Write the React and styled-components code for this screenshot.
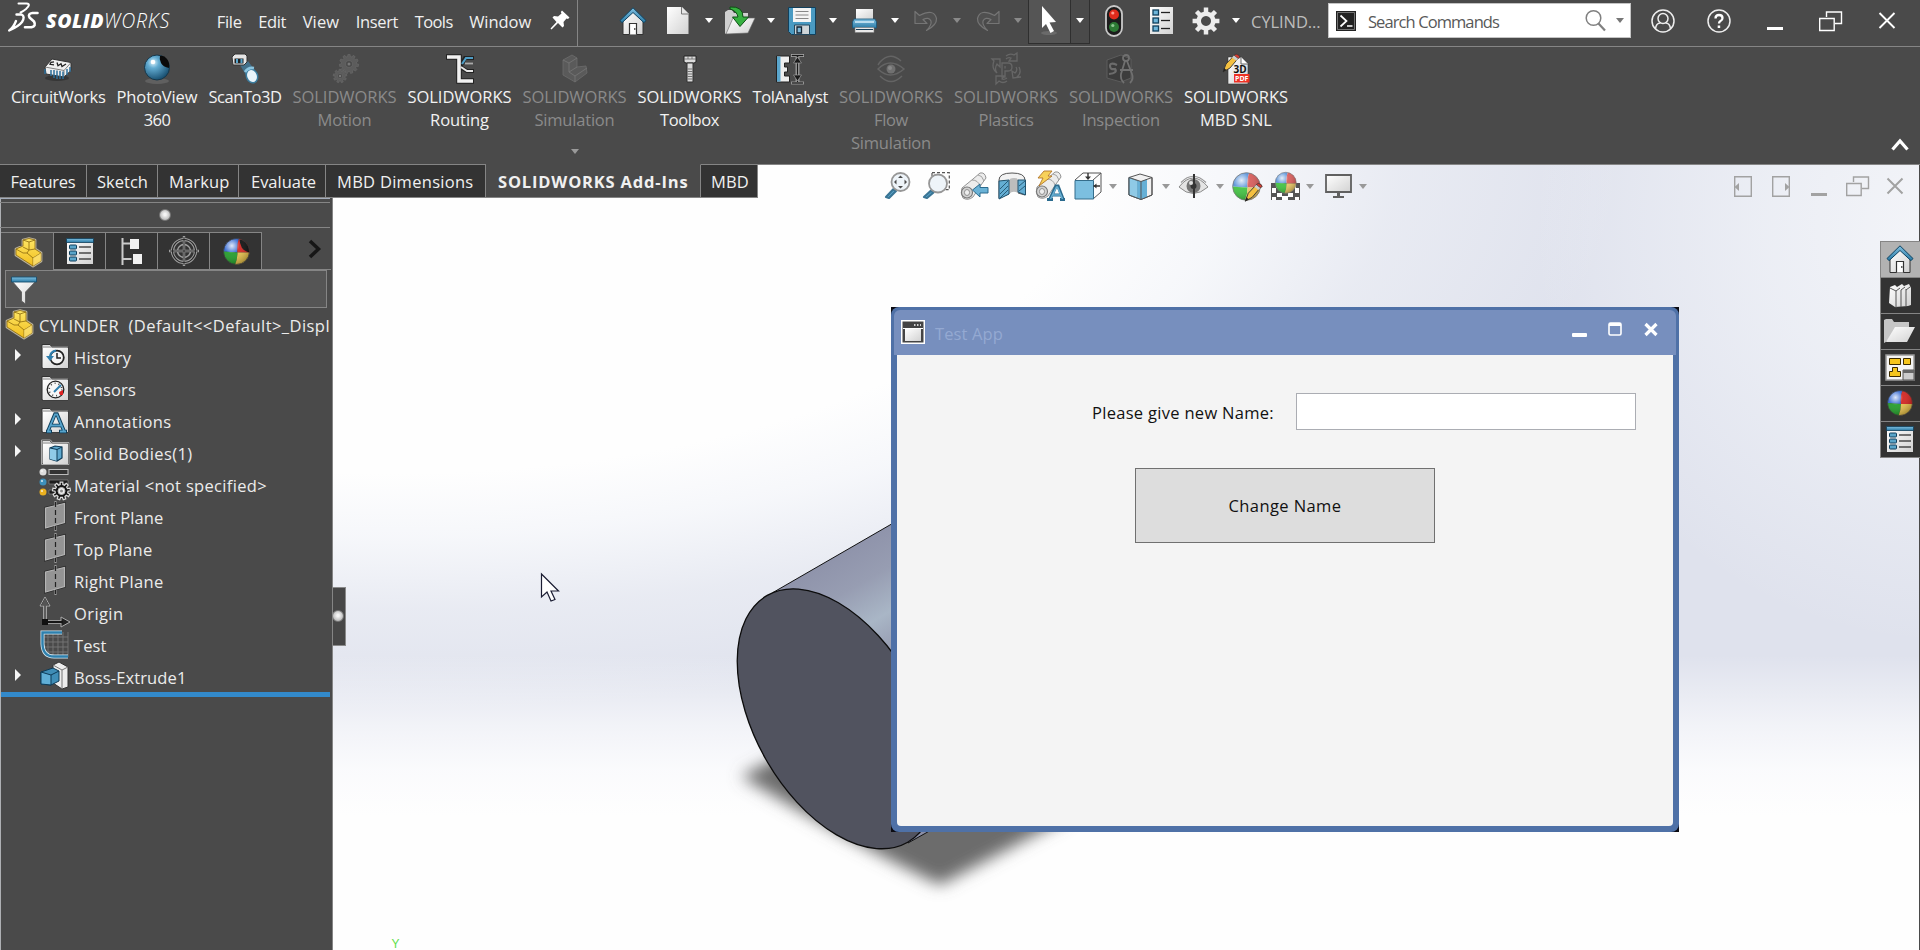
import React, { useLayoutEffect, useRef, useState } from "react";
import styled, { createGlobalStyle, css } from "styled-components";

const GlobalStyle = createGlobalStyle`
  * { box-sizing: border-box; }
  body { margin: 0; overflow: hidden; background: #4a4a4a; }
  button, input { font: inherit; }
`;

const LINE = "#858585";

/* ---------- text ---------- */

const TextSpan = styled.span`
  display: inline-block;
  white-space: pre;
`;

/* Tracks its letters so that the text fills the given width. */
function FitText({ width, children, ...rest }) {
  const ref = useRef(null);
  const [spacing, setSpacing] = useState(0);
  useLayoutEffect(() => {
    const natural = ref.current.getBoundingClientRect().width - spacing * children.length;
    setSpacing((width - natural) / children.length);
  }, [width, children]);
  return (
    <TextSpan ref={ref} style={{ letterSpacing: spacing }} {...rest}>
      {children}
    </TextSpan>
  );
}

/* ---------- drawing primitives ---------- */

const Svg = styled.svg`
  display: block;
  flex: none;
  overflow: visible;
`;

const Ico = ({ w = 28, h = 28, vw, vh, children }) => (
  <Svg width={w} height={h} viewBox={`0 0 ${vw || w} ${vh || h}`} fill="none">
    {children}
  </Svg>
);

const HiddenDefs = styled.svg`
  position: absolute;
  width: 0;
  height: 0;
`;

const Defs = () => (
  <HiddenDefs>
    <defs>
      <linearGradient id="paper" x1="0" y1="0" x2="1" y2="1">
        <stop offset="0" stopColor="#fff" />
        <stop offset="1" stopColor="#d2d2d2" />
      </linearGradient>
      <linearGradient id="blue" x1="0" y1="0" x2="0" y2="1">
        <stop offset="0" stopColor="#7fbfe0" />
        <stop offset="1" stopColor="#2a7ba6" />
      </linearGradient>
      <linearGradient id="gold" x1="0" y1="0" x2="0" y2="1">
        <stop offset="0" stopColor="#ffe766" />
        <stop offset="1" stopColor="#f0bd1c" />
      </linearGradient>
      <radialGradient id="orb" cx=".35" cy=".3" r=".75">
        <stop offset="0" stopColor="#d9f1fb" />
        <stop offset=".3" stopColor="#62abd1" />
        <stop offset="1" stopColor="#144a6b" />
      </radialGradient>
      <radialGradient id="gloss" cx=".32" cy=".28" r=".75">
        <stop offset="0" stopColor="#fff" stopOpacity=".85" />
        <stop offset=".4" stopColor="#fff" stopOpacity=".08" />
        <stop offset="1" stopColor="#000" stopOpacity=".25" />
      </radialGradient>
      <clipPath id="ballClip"><circle cx="14" cy="14" r="12.5" /></clipPath>
    </defs>
  </HiddenDefs>
);

const BallBody = ({ eye, soft }) => {
  const c = soft ? ["#5590d8", "#d85a58", "#3fc23f", "#efcb66"] : ["#2d64d0", "#d2201c", "#1f9a26", "#e6c04a"];
  return (
    <>
      <g clipPath="url(#ballClip)">
        <path d="M0 0h17q-3 7-2 15L0 14z" fill={c[0]} />
        <path d="M17 0h11v15l-13 0q-1-8 2-15z" fill={c[1]} />
        <path d="M0 14l15 1q0 7-3 13H0z" fill={c[2]} />
        <path d="M15 15h13v13H12q3-6 3-13z" fill={c[3]} />
        {eye && <path d="M17 3q4-2 7 2t3 10q-6-1-8-5t-2-7z" fill="#0c0c0c" />}
      </g>
      <circle cx="14" cy="14" r="12.5" fill="url(#gloss)" stroke={soft ? "#777" : "#3a3a3a"} strokeWidth=".7" />
    </>
  );
};

const Ball = ({ size = 26, eye, soft, children }) => (
  <Ico w={size} h={size} vw={28} vh={28}>
    <BallBody eye={eye} soft={soft} />
    {children}
  </Ico>
);

const HomeIcon = ({ size = 28 }) => (
  <Ico w={size} h={size} vw={28} vh={28}>
    <path d="M4 14L14 4l10 10v13.500H4z" fill="url(#paper)" stroke="#333" strokeWidth="1" />
    <path d="M1 13.500L14 .800l13 12.700-2 2.200L14 5.500 3 15.700z" fill="url(#blue)" stroke="#0e4260" strokeWidth="1" />
    <path d="M10.500 27.500V16.500h7v11" fill="#fff" stroke="#333" strokeWidth="1.200" />
    <path d="M15 22h1.500" stroke="#333" strokeWidth="1.500" />
  </Ico>
);

const PartIcon = () => (
  <Ico w={28} h={30}>
    <path d="M9 3l6-1.500 6 1.500v9l6 4v8l-8 5L2 18v-6l7-3z" fill="#4a4a4a" stroke="#b9b19a" strokeWidth="2.800" strokeLinejoin="round" />
    <path d="M9 3l6-1.500 6 1.500v9l6 4v8l-8 5L2 18v-6l7-3z" fill="url(#gold)" stroke="#8a680c" strokeWidth=".8" strokeLinejoin="round" />
    <path d="M9 3l6 2 6-2M15 5v8l-6-3M15 13l6-1M15 13l-2 3 6 5 8-5M19 21v8M2 12l7 4 4 0" stroke="#8a680c" strokeWidth=".8" />
    <path d="M19 21l8-5v8l-8 5z" fill="#ffe98a" opacity=".6" />
  </Ico>
);

const ListIcon = () => (
  <Ico w={28} h={27}>
    <path d="M1 1h26v25H1z" fill="url(#paper)" />
    <path d="M.500.500h27v4H.500z" fill="url(#blue)" stroke="#103f5a" strokeWidth=".8" />
    {[7, 13, 19].map((y) => (
      <g key={y}>
        <rect x="3.500" y={y} width="7" height="4" rx=".8" fill="#5aa5c9" stroke="#0f3f5c" />
        <path d={`M13 ${y + 2}h12`} stroke="#222" strokeWidth="1.200" />
      </g>
    ))}
  </Ico>
);

const NARROW_LIST = (
  <Ico w={23} h={27}>
    <path d="M0 0h23v27H0z" fill="url(#paper)" />
    {[3, 11, 19].map((y) => (
      <g key={y}>
        <rect x="3" y={y} width="5.500" height="5" fill="#6eb6da" stroke="#0f3f5c" strokeWidth="1.300" />
        <path d={`M11 ${y + 2.5}h9`} stroke="#222" strokeWidth="1.300" />
      </g>
    ))}
  </Ico>
);

const NewIcon = (
  <Ico w={22} h={27}>
    <path d="M0 0h15l6.500 6.500V27H0z" fill="url(#paper)" />
    <path d="M14.500 0v7h7" fill="#e5e5e5" stroke="#777" />
  </Ico>
);

const OpenIcon = (
  <Ico w={32} h={29}>
    <path d="M1 28V6l3-2 4 0 2 3h14v6z" fill="#cfcfcf" />
    <path d="M2 28L9 12h22l-7 15z" fill="url(#paper)" stroke="#666" strokeWidth=".6" />
    <path d="M6 1q13-1 13 10h5.500L16 20.500 8.500 11H14Q13 5 6 3z" fill="#36b040" stroke="#0d4f14" strokeWidth="1" />
  </Ico>
);

const SaveIcon = (
  <Ico w={28} h={28}>
    <path d="M.500.500h27v27h-24l-3-3z" fill="#4a9ac2" stroke="#12405c" />
    <path d="M5 1h18v14H5z" fill="#f4f4f4" />
    <path d="M7.500 4.500h13M7.500 8h13M7.500 11.500h13" stroke="#888" strokeWidth="1.200" />
    <path d="M6.500 18h15v9.500h-15z" fill="#cfd5d8" stroke="#24485e" />
    <path d="M9 20h4.500v6H9z" fill="#7fb9d8" stroke="#123" strokeWidth="1.300" />
  </Ico>
);

const PrintIcon = (
  <Ico w={25} h={24}>
    <path d="M4 0h17v11H4z" fill="url(#paper)" />
    <path d="M2 10h21l1.500 3v6h-24v-6z" fill="url(#blue)" stroke="#17567a" strokeWidth=".8" />
    <path d="M3 13h19" stroke="#d9effa" strokeWidth="1.500" />
    <path d="M3 18.500h19v5H3z" fill="#e9e9e9" stroke="#777" strokeWidth=".6" />
    <path d="M4 20.500h17" stroke="#16405a" />
  </Ico>
);

const Undo = ({ flip }) => (
  <Ico w={24} h={22}>
    <g transform={flip ? "translate(24 0) scale(-1 1)" : undefined}>
      <path d="M1 1.500v12h12L9 9.500q6-3 8 1.500 1 4-4.500 9.500Q23 15 22.500 8.500 20-2 5.500 5.500z" fill="#505050" stroke="#757575" strokeWidth="1.200" strokeLinejoin="round" />
    </g>
  </Ico>
);

const PointerIcon = (
  <Ico w={20} h={29}>
    <ellipse cx="9" cy="27" rx="8" ry="2" fill="#6a6a6a" />
    <path d="M2 0l14 16-6.500.500 4.500 8.500-3.500 2-4.500-9-4 4z" fill="#fff" />
  </Ico>
);

const TrafficIcon = (
  <Ico w={18} h={32}>
    <rect x="1" y="1" width="16" height="30" rx="8" fill="#1c1c1c" stroke="#c9c9c9" strokeWidth="1.800" />
    <circle cx="9" cy="9.500" r="5" fill="#e02b1c" />
    <circle cx="7.800" cy="8" r="1.600" fill="#ff9a8c" />
    <circle cx="9" cy="22" r="5" fill="#2c7a34" />
    <circle cx="7.800" cy="20.500" r="1.600" fill="#8cc791" />
  </Ico>
);

const gearPath = (cx, cy, r, R, n) => {
  const pts = [];
  for (let i = 0; i < n; i++) {
    const a = (i * 2 * Math.PI) / n;
    const s = Math.PI / n;
    [[r, -s * 0.6], [R, -s * 0.42], [R, s * 0.42], [r, s * 0.6]].forEach(([q, d]) =>
      pts.push(`${(cx + q * Math.sin(a + d)).toFixed(2)} ${(cy - q * Math.cos(a + d)).toFixed(2)}`)
    );
  }
  return `M${pts.join("L")}Z`;
};

const GearIcon = (
  <Ico w={28} h={28}>
    <path d={gearPath(14, 14, 9.6, 13.6, 8) + "M14 9a5 5 0 1 0 .01 0z"} fill="#ececec" fillRule="evenodd" />
  </Ico>
);

const PinIcon = (
  <Ico w={20} h={20}>
    <path d="M12 .500l7.500 7-1.500 1.500-1.500-.500-3 3.500.500 4-1.500 1.500-4.500-4.500L1.500 19.500l-1-1L6.500 12 2.500 7.500 4 6l4 .500L11.500 3.500 10.800 2z" fill="#fff" />
  </Ico>
);

/* ribbon icons */
const CircuitIcon = (
  <Ico w={30} h={28}>
    <ellipse cx="14" cy="23" rx="12" ry="3" fill="#363636" />
    <path d="M2 12L9 4l19 3.500v8L21 22 3 19z" fill="#efefef" stroke="#333" />
    <path d="M2 12l19 3.500 7-8M21 15.500V22" stroke="#666" strokeWidth=".8" />
    <path d="M11 6.800l-3 .500-1 2 4 .500M14 7.500l1 3.200 3-2 1 2.800 4-2.500" stroke="#222" strokeWidth="1.300" />
    <path d="M8 15v6M11 15v8M14 15.500V24M17 16v8M20 16.500V24M24 14v6M27 12v5M2 14v5" stroke="#2d6f9a" strokeWidth="1.500" />
  </Ico>
);
const PhotoIcon = (
  <Ico w={28} h={30}>
    <ellipse cx="14" cy="27" rx="12" ry="3" fill="#606060" />
    <circle cx="14" cy="13.500" r="12.500" fill="url(#orb)" stroke="#16374a" />
    <path d="M17 2q4-1 7 3t2 9q-6-1-8-5t-1-7z" fill="#0a0a0a" />
    <circle cx="10" cy="8" r="2.300" fill="#fff" />
  </Ico>
);
const ScanIcon = (
  <Ico w={28} h={30}>
    <path d="M9 11l8-4 9 12-10 4z" fill="#3f86ad" opacity=".65" />
    <path d="M1 3l3-3h10l2 2v6l-3 3H2z" fill="#e6e6e6" stroke="#333" />
    <path d="M3.500 4.500h9v5h-9z" fill="#222" />
    <path d="M6 5v4M10.500 5v4" stroke="#56a5cd" strokeWidth="2" />
    <ellipse cx="21" cy="22" rx="5.500" ry="7" transform="rotate(-20 21 22)" fill="#e9f4fa" stroke="#3b7c9e" strokeWidth="1.500" />
    <path d="M14 18q3-5 9-4" stroke="#8bc4df" strokeWidth="2.600" />
  </Ico>
);
const MotionIcon = (
  <Ico w={28} h={30}>
    <g fill="#5c5c5c" stroke="#6c6c6c" strokeWidth=".6" fillRule="evenodd">
      <path d={gearPath(18, 10, 7.6, 9.6, 11) + "M18 6.500a3.500 3.500 0 1 0 .01 0z"} />
      <path d={gearPath(9, 22, 5, 6.8, 9) + "M9 19.500a2.500 2.500 0 1 0 .01 0z"} />
    </g>
    <circle cx="18" cy="10" r="1.500" fill="#777" />
    <circle cx="9" cy="22" r="1.200" fill="#777" />
  </Ico>
);
const RoutingIcon = (
  <Ico w={28} h={30}>
    <path d="M0 3h13v24h15" stroke="#222" strokeWidth="5.500" />
    <path d="M14 13l5-9h9M14 13l7 4h7" stroke="#222" strokeWidth="4" />
    <path d="M1 3h12v24h14" stroke="#f2f2f2" strokeWidth="3.600" />
    <path d="M16 10l4-6h7" stroke="#4e9cc4" strokeWidth="2.200" />
    <path d="M19 9.500h8" stroke="#aaa" strokeWidth="1.800" />
    <path d="M15 13l6 4h6" stroke="#e5e5e5" strokeWidth="2" />
  </Ico>
);
const SimulationIcon = (
  <Ico w={28} h={30}>
    <path d="M2 6l9-5 5 3v9l9-1 1 7-12 9L2 21z" fill="#5a5a5a" stroke="#6c6c6c" strokeWidth=".8" />
    <path d="M2 6l6 3v9l6 4 12-8M8 9l8-5M14 22v6M8 18l8-5" stroke="#747474" strokeWidth=".9" />
  </Ico>
);
const ToolboxIcon = (
  <Ico w={14} h={28}>
    <path d="M1 1h12v6l-2 1H3L1 7z" fill="#dcdcdc" stroke="#222" />
    <path d="M1 4h12M5 1v3M9 1v3" stroke="#666" strokeWidth=".8" />
    <path d="M4 8h6v19H4z" fill="#dadada" stroke="#333" />
    <path d="M4.500 14h5M4.500 16.500h5M4.500 19h5M4.500 21.500h5M4.500 24h5" stroke="#666" strokeWidth=".9" />
  </Ico>
);
const TolIcon = (
  <Ico w={29} h={30}>
    <path d="M.500 2h13v7H8.500v4h3v5h-3v4h5v6H.500z" fill="#eee" stroke="#222" />
    <path d="M1 2.500h3.500v25H1z" fill="#5aa6cd" />
    <path d="M15 1.500h13M15 29h13" stroke="#ddd" strokeWidth="2.600" />
    <path d="M21.500 2v26" stroke="#c5c5c5" strokeWidth="3.600" />
    <path d="M15.500 1.500h12M15.500 29h12M21.500 2v26" stroke="#1a1a1a" strokeWidth="1.600" />
    <path d="M17.500 9l4-6 4 6zM17.500 21l4 6 4-6z" fill="#1a1a1a" stroke="#aaa" strokeWidth=".6" />
  </Ico>
);
const FlowIcon = (
  <Ico w={30} h={26}>
    <g stroke="#646464" strokeWidth="1.500">
      <path d="M4 6Q14-5 25 5M4 6l-2 3M4 20q11 11 22 0" />
      <path d="M2 13q12-12 26 0-14 12-26 0z" />
    </g>
    <circle cx="15" cy="13" r="4.500" fill="#707070" />
    <circle cx="14" cy="12" r="2" fill="#888" />
  </Ico>
);
const PlasticsIcon = (
  <Ico w={30} h={32}>
    <g stroke="#666" strokeWidth="1.300">
      <path d="M11 24V10h6q4 0 4 4t-4 4h-3v6zM14 13v2.500" />
      <path d="M1 6h8v8L6 11q-3 5 0 9-6-5-3-12zM15 3q4-3 8-1l3-2v8h-8l2-3q-3-1-5 1M28 14q3 6-2 10h4l-8 1-1-7 3 2q3-3 1-6M16 28q-4 3-8 0l-3 3v-8h8l-2 3q2 1 5-1" />
    </g>
  </Ico>
);
const InspectionIcon = (
  <Ico w={30} h={32}>
    <path d="M1 7l14-5 10 4v19l-10 4L1 25z" fill="#3c3c3c" stroke="#5c5c5c" />
    <path d="M11 12q-7-3-7 1t5 3q3 4-6 5" stroke="#6c6c6c" strokeWidth="2.200" />
    <g stroke="#707070" strokeWidth="1.800"><circle cx="20" cy="5" r="3" /><path d="M19 8l-4 13q-1 5 3 9M21 8l5 13q2 5-2 9M14 17h13" /></g>
  </Ico>
);
const Pencil = ({ x, y, s = 1 }) => (
  <g transform={`translate(${x} ${y}) scale(${s})`}>
    <path d="M1 17L4 9 12 .500l4 3-8 9.500z" fill="#f4c040" stroke="#333" strokeWidth=".9" />
    <path d="M12 .500l2-1.500q4 1 4 3.500l-2 1z" fill="#d23c32" stroke="#333" strokeWidth=".7" />
    <path d="M10 2.500l4.500 3.200 1.500-2L12 .500z" fill="#ccc" />
    <path d="M1 17l1-4 2.500 2z" fill="#222" />
  </g>
);
const BadgeText = styled.text`
  font: 700 ${(p) => p.$size}px "Open Sans", sans-serif;
`;
const MbdIcon = (
  <Ico w={28} h={32}>
    <path d="M6 4h13l7 7v20H6z" fill="url(#paper)" stroke="#333" strokeWidth=".6" />
    <path d="M19 4v7h7" stroke="#666" fill="#fff" />
    <BadgeText $size={10} x="11.500" y="20" fill="#111">3D</BadgeText>
    <path d="M12 21h15.500v8.500H12z" fill="#ee3124" />
    <BadgeText $size={7} x="13" y="28" fill="#fff">PDF</BadgeText>
    <Pencil x={0} y={2} s={1} />
  </Ico>
);

/* feature tree icons */
const Folder = ({ children }) => (
  <Ico w={28} h={26}>
    <path d="M1 25V1.500h8l2 2.500h16v21z" fill="#e0e0e0" stroke="#333" strokeWidth="1" />
    <path d="M2 5h25v20H2z" fill="url(#paper)" />
    <path d="M1 4h26" stroke="#999" />
    {children}
  </Ico>
);
const HistoryIcon = (
  <Folder>
    <circle cx="16" cy="14.500" r="6.800" stroke="#222" strokeWidth="1.800" fill="#f5f5f5" />
    <path d="M16 10v5h4" stroke="#222" strokeWidth="1.500" />
    <path d="M5 13h8l-4 5z" fill="#2f7fae" /><path d="M9 14q0-5 6-6.500" stroke="#2f7fae" strokeWidth="2.200" />
  </Folder>
);
const SensorsIcon = (
  <Folder>
    <circle cx="14.500" cy="14.500" r="8.300" stroke="#222" strokeWidth="1.300" fill="#f7f7f7" />
    <circle cx="14.500" cy="14.500" r="6.300" stroke="#444" strokeWidth="1.600" strokeDasharray="1 3" />
    <path d="M13 17l7-7" stroke="#2f7fae" strokeWidth="2" />
    <path d="M18 17l4-2v5l-3 0z" fill="#d22" />
  </Folder>
);
const AnnotationsIcon = (
  <Folder>
    <path d="M7 24L14 7h2l7 17M10 18.500h10M5 24.500h6M18 24.500h8" stroke="#0f3f5c" strokeWidth="3.600" />
    <path d="M7 24L14 7.500h2L23 24M10 18.500h10M6 24.500h4M19 24.500h6" stroke="#57a4cc" strokeWidth="1.800" />
  </Folder>
);
const Cube = ({ x, y, s }) => (
  <g transform={`translate(${x} ${y}) scale(${s})`}>
    <path d="M0 2l5-2 7 1v11l-5 3-7-2z" fill="#5fa9cf" stroke="#0d3a56" strokeWidth="1.200" />
    <path d="M0 2l7 1.500V15l-7-2z" fill="#8fcbe8" />
    <path d="M0 2l7 1.500V15M7 3.500L12 1" stroke="#0d3a56" strokeWidth="1" />
  </g>
);
const BodiesIcon = (
  <Folder>
    <path d="M.500 25V1h9l2 2.500H28V25.500H.500z" stroke="#aaa" strokeWidth="1" />
    <Cube x={9} y={7} s={1} />
  </Folder>
);
const MaterialIcon = (
  <Ico w={32} h={30}>
    {[["#ddd", 3], ["#3d8fba", 13], ["#eab020", 23]].map(([c, y]) => (
      <g key={y}><circle cx="4" cy={y} r="3.500" fill={c} /><circle cx="3" cy={y - 1} r="1" fill="#fff" opacity=".8" /></g>
    ))}
    <path d="M10 .500h19v5H10z" fill="#333" stroke="#bbb" strokeWidth="1.100" />
    <path d="M10 11h19v4H10zM10 21h10v4H10z" fill="#1d1d1d" stroke="#888" strokeWidth=".7" />
    <path d={gearPath(22.500, 22, 6.500, 9, 9)} fill="#151515" stroke="#dcdcdc" strokeWidth="1.200" />
    <circle cx="22.500" cy="22" r="3.500" fill="#eee" stroke="#bbb" />
    <circle cx="22.500" cy="22" r="1.500" fill="#888" />
  </Ico>
);
const PlaneIcon = (
  <Ico w={22} h={30}>
    <path d="M1.500 7L20.500 2.500v19L1.500 27z" fill="#8f8f8f" stroke="#2a2a2a" strokeWidth="2.600" />
    <path d="M1.500 7L20.500 2.500v19L1.500 27z" fill="#949494" stroke="#b5b5b5" strokeWidth="1.200" />
    <path d="M11.500 0v5M11.500 25v5" stroke="#999" strokeWidth="2.200" />
    <path d="M11.500 1v28" stroke="#222" strokeWidth="1.200" strokeDasharray="5 3" />
  </Ico>
);
const OriginIcon = (
  <Ico w={30} h={30}>
    <path d="M5 25V4M5 25h22" stroke="#aaa" strokeWidth="3.800" />
    <path d="M0 9L5 0l5 9zM21 20l9 5-9 5z" fill="#222" stroke="#aaa" />
    <path d="M5 25V6" stroke="#555" strokeWidth="1.800" />
    <path d="M5 25h18" stroke="#161616" strokeWidth="2.200" />
    <path d="M2 22h6v6H2z" fill="#111" />
    <path d="M1.500 8L5 1l3.500 7z" fill="#555" />
  </Ico>
);
const SketchIcon = (
  <Ico w={29} h={29}>
    <path d="M8 2v25M13 2v25M18 2v25M23 2v25M28 2v25M3 7h25M3 12h25M3 17h25M3 22h25" stroke="#777" strokeWidth=".9" />
    <path d="M22 2.500H2.500V14Q3 26.500 14 26.500h14" stroke="#d4e8f2" strokeWidth="4" />
    <path d="M22 2.500H2.500V14Q3 26.500 14 26.500h14" stroke="#2e80ad" strokeWidth="2.400" />
  </Ico>
);
const ExtrudeIcon = (
  <Ico w={29} h={28}>
    <path d="M13 3l6-3 9 5v20l-6 2-9-6z" fill="#eee" stroke="#333" />
    <path d="M13 3l9 5 6-3M22 8v19" stroke="#777" />
    <path d="M1 10l12-4 6 3v10l-8 4L1 22z" fill="#3f8db6" stroke="#0d3a56" />
    <path d="M1 10l10 3v10L1 22z" fill="#5faed6" stroke="#0d3a56" />
    <path d="M11 13l8-4" stroke="#0d3a56" />
  </Ico>
);
const FilterIcon = (
  <Ico w={26} h={29}>
    <path d="M1 5l9.500 11v9l4 3V16L25 5z" fill="url(#paper)" stroke="#555" strokeWidth=".8" />
    <path d="M.500 1h25v5H.500z" fill="url(#blue)" stroke="#174e6e" strokeWidth=".9" />
  </Ico>
);
const ConfigIcon = (
  <Ico w={22} h={27}>
    <path d="M1.500 0v27M1.500 5.500h8M1.500 21h9" stroke="#ccc" strokeWidth="2" />
    <path d="M9 1h9v10H9zM12 16h9v10h-9z" fill="#f2f2f2" />
  </Ico>
);
const TargetIcon = (
  <Ico w={30} h={30}>
    <g stroke="#a0a0a0"><circle cx="15" cy="15" r="11.500" strokeWidth="3.200" /><circle cx="15" cy="15" r="6.500" strokeWidth="1.400" /><path d="M15 0v30M0 15h30" strokeWidth="2.400" /></g>
    <g stroke="#262626" strokeWidth="1.200"><circle cx="15" cy="15" r="11.500" /><path d="M15 1v28M1 15h28" strokeWidth=".9" /></g>
  </Ico>
);

/* heads-up view icons */
const lens = (cx, cy, r) => (
  <>
    <path d={`M${cx - r * 0.8} ${cy + r * 0.8}L2 25l3 1L${cx - r * 0.5} ${cy + r}z`} fill="#5aa6cd" stroke="#3a7595" strokeWidth="2.200" strokeLinejoin="round" />
    <circle cx={cx} cy={cy} r={r} fill="#eef4f9" stroke="#979797" strokeWidth="1.800" />
  </>
);
const ZoomFit = (
  <Ico w={28} h={28}>
    {lens(16.500, 10, 9)}
    <path d="M16.500 3.500l2.500 2.500h-5zM16.500 16.500l2.500-2.500h-5zM10 10l2.500-2.500v5zM23 10l-2.500-2.500v5z" fill="#4a4a4a" />
  </Ico>
);
const ZoomArea = (
  <Ico w={28} h={28}>
    <path d="M10 .700h17.300v17h-6M10 1v3" stroke="#555" strokeDasharray="3 2" strokeWidth="1.200" />
    {lens(16, 11.500, 9)}
  </Ico>
);
const scope = (
  <>
    <path d="M2 16L13 7l7-6q5-1 6 5l-5 7-8 12q-5 4-10 1-3-5-1-10z" fill="#ececec" stroke="#888" strokeWidth=".9" />
    <ellipse cx="7" cy="20.500" rx="5.500" ry="5.500" fill="#d2d2d2" stroke="#777" strokeWidth="1.100" />
    <ellipse cx="7" cy="20.500" rx="2.600" ry="3" fill="#eee" stroke="#888" strokeWidth=".9" />
    <path d="M12 8q6 0 8 6M18 3q4 0 6 6" stroke="#999" strokeWidth=".9" />
  </>
);
const PrevView = (
  <Ico w={28} h={28}>
    {scope}
    <path d="M12.500 18l7.500-6v3.500h8v5.500h-8v4z" fill="#6ab2d6" stroke="#2b6b8e" />
  </Ico>
);
const SectionIcon = (
  <Ico w={28} h={28}>
    <path d="M1 8q0-7 13-7t13 7v15l-7-2V9h-9v13l-10 4z" fill="#f2f2f2" stroke="#555" />
    <path d="M11 9q0-3 5-3t4 3v12q-5-3-9 1z" fill="#bdbdbd" />
    <path d="M1 9l10-1v14L1 27zM20 8h7.500v15L20 20z" fill="#64aed4" stroke="#22536e" />
    <path d="M2 17l8-8M2 22l8-8M2 26l8-8M21 14l6-5M21 19l6-5" stroke="#22536e" strokeWidth=".9" />
  </Ico>
);
const DynamicIcon = (
  <Ico w={30} h={30}>
    {scope}
    <path d="M9 0h8l-4 5h4L4 15l4-8H3z" fill="#f7d15a" stroke="#b2762a" strokeWidth=".9" />
    <path d="M15 28L21 15h2l5 13M17 24h9M12 28.500h6M25 28.500h5" stroke="#2b6b8e" strokeWidth="3.200" />
    <path d="M15.500 28L21.500 16h1l5 12M17 24h9" stroke="#67b0d4" strokeWidth="1.500" />
  </Ico>
);
const OrientIcon = (
  <Ico w={28} h={28}>
    <path d="M1 8L9 1h18v19l-8 7M19 8l8-7" stroke="#555" fill="#fdfdfd" />
    <path d="M1 8.500h18.500V27H1z" fill="#7cbfe0" stroke="#356d8b" />
    <path d="M14 1v5M19.500 14H26" stroke="#333" strokeWidth="1.400" /><path d="M11 4.500h6L14 8zM22.500 11.500v5L19.500 14z" fill="#333" />
  </Ico>
);
const DisplayIcon = (
  <Ico w={25} h={27}>
    <path d="M1 4.500L12 1l12 3.500V22l-11 4.500L1 22z" fill="#f1f1f1" stroke="#555" />
    <path d="M1 4.500L10 8v17.500L1 22z" fill="#8fcae6" stroke="#356d8b" strokeWidth=".6" />
    <path d="M9.500 7.500l3.500 1L19 6V24L13 26.500l-3.500-1z" fill="#66b0d6" />
    <path d="M1 4.500L13 8.500l11-4M13 8.500v18M1 4.500V22l12 4.500L24 22V4.500" stroke="#555" />
  </Ico>
);
const EyeIcon = (
  <Ico w={29} h={24}>
    <path d="M0 13Q14-5 29 13 14 26 0 13z" fill="#e4e4e4" stroke="#8a8a8a" />
    <path d="M2 8.500Q14-4 27 8.500" stroke="#999" strokeWidth="1.200" />
    <circle cx="14.500" cy="12" r="7" fill="#757575" /><circle cx="14.500" cy="12" r="3" fill="#333" />
    <circle cx="12" cy="9" r="2" fill="#ddd" />
    <path d="M15 0v24" stroke="#333" strokeWidth="2" />
  </Ico>
);
const AppearanceIcon = (
  <Ball size={31} soft><Pencil x={12} y={12} s={0.9} /></Ball>
);
const SceneIcon = (
  <Ico w={29} h={30}>
    <path d="M0 12h29v17H0z" fill="#555" />
    <path d="M5 13h4v4H5zM21 13h4v4h-4zM1 17h4v5H1zM24 17h4v5h-4zM6 22h5v4H6zM17 22h5v4h-5zM11 25h6v4h-6zM1 26h4v3H1zM24 26h4v3h-4z" fill="#fff" />
    <g transform="translate(3 0) scale(.84)"><BallBody soft /></g>
  </Ico>
);
const MonitorIcon = (
  <Ico w={27} h={24}>
    <path d="M1 1h25v17H1z" fill="url(#paper)" stroke="#606060" strokeWidth="1.800" />
    <path d="M12 19h3v3h4v2H8v-2h4z" fill="#606060" />
  </Ico>
);

/* ---------- title bar ---------- */

const Shell = styled.div`
  width: 1920px;
  height: 950px;
  display: flex;
  flex-direction: column;
  overflow: hidden;
  background: #4a4a4a;
  color: #f0f0f0;
  font: 16.5px/23px "Open Sans", "Noto Sans", sans-serif;
`;

const TitleBar = styled.header`
  display: flex;
  height: 47px;
  flex: none;
  border-bottom: 1px solid ${LINE};
`;

const Brand = styled.div`
  display: flex;
  width: 217px;
  padding: 1px 0 0 8px;
`;
const BrandName = styled.div`
  display: flex;
  margin: 8px 0 0 7px;
  font-size: 19.5px;
  font-style: italic;
  line-height: 23px;
  color: #fff;
`;
const BrandPart = styled(FitText)`
  font-weight: ${(p) => (p.$bold ? 800 : 300)};
`;

const Menu = styled.nav`
  display: flex;
  width: 362px;
  gap: 16.5px;
  padding-top: 10px;
  border-right: 1px solid ${LINE};
`;
const PinSlot = styled.div`
  margin-left: 2px;
`;

const Tools = styled.div`
  display: flex;
  padding-left: 28px;
`;
const Cell = styled.div`
  display: flex;
  align-items: center;
  justify-content: center;
  width: ${(p) => p.$w}px;
  height: ${(p) => p.$h || 41}px;
`;
const SelectBox = styled.div`
  display: flex;
  width: 62px;
  height: 44px;
  background: #555;
  border: 1px solid #2f2f2f;
  border-top: 0;
`;
const SelectArrow = styled.div`
  display: flex;
  width: 19px;
  height: 43px;
  background: #4a4a4a;
  border-left: 1px solid #2f2f2f;
`;
const Caret = styled.i`
  width: 0;
  height: 0;
  border: 4px solid transparent;
  border-top: 5px solid ${(p) => p.$c || "#fff"};
  border-bottom: 0;
`;
const DocName = styled.div`
  width: 84px;
  padding: 10px 0 0 7px;
  color: #bdbdbd;
`;
const Search = styled.div`
  display: flex;
  align-items: center;
  width: 303px;
  height: 35px;
  margin-top: 3px;
  padding-left: 7px;
  background: #fff;
  border: 1px solid #c4c4c4;
  color: #585858;
`;
const SearchHint = styled.div`
  width: 229px;
  flex: none;
  padding: 2px 0 0 12px;
`;
const WindowControls = styled.div`
  display: flex;
  align-items: flex-start;
  height: 41px;
`;

const DropCell = ({ icon, dim, w = 24 }) => (
  <>
    <Cell $w={38}>{icon}</Cell>
    <Cell $w={w}><Caret $c={dim ? "#8a8a8a" : "#fff"} /></Cell>
  </>
);

const MENU = [["File", 25], ["Edit", 28], ["View", 36.5], ["Insert", 42.5], ["Tools", 38], ["Window", 62]];

const Title = () => (
  <TitleBar>
    <Brand>
      <Ico w={31} h={35}>
        <g stroke="#fff" strokeLinecap="round" strokeLinejoin="round">
          <path d="M10.500 2.500h8q5 .500-.500 5.500-3 2.500-5.500 3.500" strokeWidth="2" />
          <path d="M8.500 13.500h5q4 2 .500 7.500Q11 25 1.200 29.500 5.500 26.500 8 20" strokeWidth="2.400" />
          <path d="M29.500 12h-5q-5 .500-3 4.500l4.500 4q2.500 4.500-2.500 5.800H17" strokeWidth="2.600" />
        </g>
      </Ico>
      <BrandName>
        <BrandPart width={58} $bold>SOLID</BrandPart>
        <BrandPart width={66}>WORKS</BrandPart>
      </BrandName>
    </Brand>
    <Menu>
      {MENU.map(([t, w]) => <FitText key={t} width={w}>{t}</FitText>)}
      <PinSlot>{PinIcon}</PinSlot>
    </Menu>
    <Tools>
      <Cell $w={53}><HomeIcon /></Cell>
      <DropCell icon={NewIcon} />
      <DropCell icon={OpenIcon} />
      <DropCell icon={SaveIcon} />
      <DropCell icon={PrintIcon} />
      <DropCell icon={<Undo />} dim />
      <DropCell icon={<Undo flip />} dim w={21} />
      <SelectBox>
        <Cell $w={42}>{PointerIcon}</Cell>
        <SelectArrow><Cell $w={17}><Caret /></Cell></SelectArrow>
      </SelectBox>
      <Cell $w={48}>{TrafficIcon}</Cell>
      <Cell $w={47}>{NARROW_LIST}</Cell>
      <Cell $w={42}>{GearIcon}</Cell>
      <Cell $w={17}><Caret /></Cell>
    </Tools>
    <DocName><FitText width={69.5}>CYLIND...</FitText></DocName>
    <Search>
      <Ico w={20} h={20}>
        <path d="M0 0h20v20H0z" fill="#222" /><path d="M1.500 1.500h17v17h-17z" stroke="#888" strokeWidth=".8" />
        <path d="M4.500 4.500l6 5.500-6 5.500M11 15h5.500" stroke="#fff" strokeWidth="1.700" />
      </Ico>
      <SearchHint><FitText width={131}>Search Commands</FitText></SearchHint>
      <Ico w={25} h={21}>
        <circle cx="8.500" cy="8" r="7.300" stroke="#808080" strokeWidth="1.500" /><path d="M13.500 13.500l6.500 7" stroke="#808080" strokeWidth="2.200" />
      </Ico>
      <Cell $w={20} $h={33}><Caret $c="#777" /></Cell>
    </Search>
    <WindowControls>
      <Cell $w={64}>
        <Ico w={24} h={24}><g stroke="#eee" strokeWidth="1.500"><circle cx="12" cy="12" r="11" /><circle cx="12" cy="9.500" r="5" /><path d="M4.500 20q.500-6 5-6M19.500 20q-.500-6-5-6" /></g></Ico>
      </Cell>
      <Cell $w={49}>
        <Ico w={24} h={24}><circle cx="12" cy="12" r="11" stroke="#eee" strokeWidth="1.500" /><path d="M8.500 9.500q0-3.500 3.500-3.500t3.500 3q0 2-2 3-1.500.800-1.500 2.500" stroke="#fff" strokeWidth="2.300" /><path d="M10.700 16.500h2.500V19h-2.500z" fill="#fff" /></Ico>
      </Cell>
      <Cell $w={62} $h={57}><Ico w={16} h={3}><path d="M0 0h16v3H0z" fill="#fff" /></Ico></Cell>
      <Cell $w={49}><Ico w={23} h={20}><path d="M7.500 6V1h15v11.500H16M.700 7.500h14.500v12H.700z" stroke="#fff" strokeWidth="1.400" /></Ico></Cell>
      <Cell $w={65}><Ico w={16} h={15}><path d="M.500 0L15.500 15M15.500 0L.500 15" stroke="#fff" strokeWidth="1.900" /></Ico></Cell>
    </WindowControls>
  </TitleBar>
);

/* ---------- ribbon ---------- */

const Ribbon = styled.section`
  display: flex;
  justify-content: space-between;
  height: 118px;
  flex: none;
  padding: 7px 11px 0 11px;
  border-bottom: 1px solid ${LINE};
`;
const AddIns = styled.div`
  display: flex;
  gap: 11px;
`;
const AddIn = styled.div`
  display: flex;
  flex-direction: column;
  align-items: center;
  width: ${(p) => p.$w}px;
  color: ${(p) => (p.$off ? "#8b8b8b" : "#f2f2f2")};
`;
const AddInIcon = styled.div`
  display: flex;
  align-items: center;
  height: 30px;
  margin-bottom: 1px;
`;
const MoreCaret = styled(Caret)`
  margin-top: 18px;
`;
const Collapse = styled.div`
  align-self: flex-end;
  padding-bottom: 13px;
`;

const ADDINS = [
  [94.500, CircuitIcon, [["CircuitWorks", 94.500]]],
  [81, PhotoIcon, [["PhotoView", 81], ["360", 26.500]]],
  [73, ScanIcon, [["ScanTo3D", 73]]],
  [104, MotionIcon, [["SOLIDWORKS", 104], ["Motion", 54]], true],
  [104, RoutingIcon, [["SOLIDWORKS", 104], ["Routing", 59]]],
  [104, SimulationIcon, [["SOLIDWORKS", 104], ["Simulation", 80]], true, true],
  [104, ToolboxIcon, [["SOLIDWORKS", 104], ["Toolbox", 59]]],
  [75.500, TolIcon, [["TolAnalyst", 75.500]]],
  [104, FlowIcon, [["SOLIDWORKS", 104], ["Flow", 34], ["Simulation", 80]], true],
  [104, PlasticsIcon, [["SOLIDWORKS", 104], ["Plastics", 55]], true],
  [104, InspectionIcon, [["SOLIDWORKS", 104], ["Inspection", 78]], true],
  [104, MbdIcon, [["SOLIDWORKS", 104], ["MBD SNL", 72]]],
];

const RibbonBar = () => (
  <Ribbon>
    <AddIns>
      {ADDINS.map(([w, icon, lines, off, more], i) => (
        <AddIn key={i} $w={w} $off={off}>
          <AddInIcon>{icon}</AddInIcon>
          {lines.map(([t, tw]) => <FitText key={t} width={tw}>{t}</FitText>)}
          {more && <MoreCaret $c="#9a9a9a" />}
        </AddIn>
      ))}
    </AddIns>
    <Collapse><Ico w={18} h={12}><path d="M1.500 10.500L9 2l7.500 8.500" stroke="#fff" strokeWidth="3.200" /></Ico></Collapse>
  </Ribbon>
);

/* ---------- workspace ---------- */

const Work = styled.main`
  position: relative;
  display: flex;
  flex: 1;
  min-height: 0;
`;
const TabStrip = styled.div`
  position: absolute;
  z-index: 2;
  top: -1px;
  left: 0;
  display: flex;
  height: 34px;
`;
const Tab = styled.div`
  width: ${(p) => p.$w}px;
  padding: 5px 0 0 ${(p) => p.$pad || 10}px;
  border: solid ${LINE};
  border-width: 1px 1px 1px 0;
  background: #333;
  ${(p) => p.$active && css`
    background: #4a4a4a;
    border-top-color: #4a4a4a;
    font-weight: 700;
  `}
`;
const TABS = [
  ["Features", 87, 65, 10.5], ["Sketch", 71, 51], ["Markup", 81, 60.5, 11], ["Evaluate", 87, 65, 12],
  ["MBD Dimensions", 160, 136.5, 11], ["SOLIDWORKS Add-Ins", 215, 190.5, 12, true], ["MBD", 57, 38],
];

const Panel = styled.aside`
  display: flex;
  flex-direction: column;
  width: 333px;
  flex: none;
  padding-top: 33px;
  border-right: 1px solid ${LINE};
  border-left: 1px solid #aeb0b4;
`;
const PanelEdge = styled.div`
  width: 330px;
  height: 4px;
  margin-left: -1px;
  border-top: 1px solid #a4adbc;
`;
const PanelGrip = styled.div`
  display: flex;
  align-items: center;
  justify-content: center;
  width: 330px;
  height: 26px;
  margin-left: -1px;
  padding-bottom: 1px;
  border: solid ${LINE};
  border-width: 1px 0;
`;
const Dot = styled.i`
  width: 12px;
  height: 12px;
  border: 1.5px solid #777;
  border-radius: 50%;
  background: radial-gradient(circle at 50% 45%, #f4f4f4 15%, #a8a8a8 90%);
`;
const PanelTabs = styled.div`
  display: flex;
  width: 330px;
  height: 38px;
  margin-top: 4px;
  border-bottom: 1px solid ${LINE};
`;
const PanelTab = styled.div`
  display: flex;
  align-items: center;
  justify-content: center;
  width: ${(p) => (p.$active ? 53 : 52)}px;
  height: ${(p) => (p.$active ? 38 : 37)}px;
  padding-left: ${(p) => (p.$active ? 2 : 1)}px;
  background: ${(p) => (p.$active ? "#4a4a4a" : "#333")};
  border: solid ${LINE};
  border-width: 1px 1px 0 0;
`;
const More = styled.div`
  margin: 7px 0 0 46px;
`;
const FilterBar = styled.div`
  width: 322px;
  height: 38px;
  margin-left: 4px;
  padding: 5px 0 0 5px;
  background: #555;
  border: 1px solid ${LINE};
`;
const Tree = styled.div`
  width: 329px;
  border-bottom: 5px solid #338acb;
`;
const Row = styled.div`
  display: flex;
  align-items: center;
  height: 32px;
  padding-left: ${(p) => (p.$root ? 4 : 14)}px;
  padding-top: 3px;
  color: #ececec;
`;
const RowArrow = styled.i`
  width: 0;
  height: 0;
  margin-bottom: 5px;
  border: 6px solid transparent;
  border-left-color: ${(p) => (p.$on ? "#f5f5f5" : "transparent")};
  border-right: 0;
`;
const RowIcon = styled.div`
  display: flex;
  align-items: center;
  justify-content: center;
  width: ${(p) => (p.$root ? 28 : 33)}px;
  height: 30px;
  flex: none;
  margin-left: ${(p) => (p.$root ? 0 : 17)}px;
  margin-right: ${(p) => (p.$root ? 6 : 3)}px;
  padding-bottom: 3px;
`;

const TREE = [
  ["History", 57.500, HistoryIcon, true],
  ["Sensors", 62, SensorsIcon],
  ["Annotations", 97.500, AnnotationsIcon, true],
  ["Solid Bodies(1)", 118.500, BodiesIcon, true],
  ["Material <not specified>", 193, MaterialIcon],
  ["Front Plane", 89.500, PlaneIcon],
  ["Top Plane", 78.500, PlaneIcon],
  ["Right Plane", 89.500, PlaneIcon],
  ["Origin", 49.500, OriginIcon],
  ["Test", 32.500, SketchIcon],
  ["Boss-Extrude1", 112.500, ExtrudeIcon, true],
];

const FeaturePanel = () => (
  <Panel>
    <PanelEdge />
    <PanelGrip><Dot /></PanelGrip>
    <PanelTabs>
      <PanelTab $active><PartIcon /></PanelTab>
      <PanelTab><ListIcon /></PanelTab>
      <PanelTab>{ConfigIcon}</PanelTab>
      <PanelTab>{TargetIcon}</PanelTab>
      <PanelTab><Ball size={29} eye /></PanelTab>
      <More><Ico w={13} h={20}><path d="M2 2l8.500 8L2 18" stroke="#161616" strokeWidth="3.500" /></Ico></More>
    </PanelTabs>
    <FilterBar>{FilterIcon}</FilterBar>
    <Tree>
      <Row $root>
        <RowIcon $root><PartIcon /></RowIcon>
        <FitText width={80}>CYLINDER</FitText>
        <FitText width={211}>{"  (Default<<Default>_Displ"}</FitText>
      </Row>
      {TREE.map(([t, w, icon, open]) => (
        <Row key={t}>
          <RowArrow $on={open} />
          <RowIcon>{icon}</RowIcon>
          <FitText width={w}>{t}</FitText>
        </Row>
      ))}
    </Tree>
  </Panel>
);

const Viewport = styled.section`
  position: relative;
  flex: 1;
  overflow: hidden;
  border-right: 1px solid #4a4a4a;
  background:
    linear-gradient(180deg, rgba(255,255,255,0) 490px, rgba(254,254,255,.25) 520px, rgba(254,254,255,.6) 560px, rgba(254,254,255,.88) 605px, #fefefe 650px),
    radial-gradient(ellipse 420px 420px at 1620px 60px, rgba(246,247,250,.9) 0, rgba(244,246,250,.6) 45%, rgba(244,246,250,0) 100%),
    radial-gradient(ellipse 1170px 530px at 60px -10px, #fefefe 60%, rgba(250,251,253,.85) 72%, rgba(240,242,247,.55) 86%, rgba(224,227,238,0) 105%),
    #dfe2ed;
`;
const Scene = styled.svg`
  position: absolute;
  inset: 0;
`;
const AxisLabel = styled.text`
  font: 12px "Liberation Sans", sans-serif;
`;
const Handle = styled.div`
  position: absolute;
  top: 422px;
  left: 0;
  display: flex;
  align-items: center;
  width: 13px;
  height: 59px;
  padding-right: 1px;
  background: #474747;
  border: 1px solid #8a8a8a;
  border-left: 0;
`;
const HandleDot = styled(Dot)`
  flex: none;
  margin: 0 0 1px -1px;
`;
const ViewBar = styled.div`
  position: absolute;
  top: 0;
  left: 546px;
  display: flex;
  height: 42px;
`;
const DocControls = styled.div`
  position: absolute;
  top: 0;
  right: 5px;
  display: flex;
  height: 43px;
`;
const TaskPane = styled.div`
  position: absolute;
  z-index: 3;
  top: 76px;
  right: 0;
  width: 40px;
  border: solid ${LINE};
  border-width: 1px 0 0 1px;
`;
const TaskTab = styled.div`
  display: flex;
  align-items: center;
  justify-content: center;
  height: 36px;
  padding: 0 2px 1px 0;
  background: ${(p) => (p.$active ? "#b2b2b2" : "#333")};
  border-bottom: 1px solid ${LINE};
`;

const VIEW_ICONS = [
  [38, ZoomFit], [38, ZoomArea], [38, PrevView], [38, SectionIcon], [38, DynamicIcon], [38, OrientIcon], [12],
  [43, DisplayIcon], [8], [46, EyeIcon], [8], [45, AppearanceIcon], [32, SceneIcon], [18], [38, MonitorIcon], [12],
];

const GRAY = "#a2a2a2";

const ModelScene = () => (
  <Scene width="1586" height="785" viewBox="333 165 1586 785">
    <defs>
      <linearGradient id="side" gradientUnits="userSpaceOnUse" x1="800" y1="560" x2="872" y2="685">
        <stop offset="0" stopColor="#8c90a8" />
        <stop offset=".35" stopColor="#979db2" />
        <stop offset=".62" stopColor="#a9b6c6" />
        <stop offset=".85" stopColor="#979db2" />
        <stop offset="1" stopColor="#8a8ea6" />
      </linearGradient>
      <filter id="soft" x="-20%" y="-50%" width="140%" height="200%"><feGaussianBlur stdDeviation="8" /></filter>
    </defs>
    <path d="M741 776l71-36h266l-13 79-125 66q-92-44-199-109z" fill="#6c6c6c" filter="url(#soft)" />
    <path d="M773 592.500L960 484.500 1110 730 908 843z" fill="url(#side)" stroke="#111" strokeWidth="1" />
    <ellipse cx="837.500" cy="718.800" rx="142" ry="82.300" transform="rotate(60.350 837.500 718.800)" fill="#51535f" stroke="#0c0c0c" strokeWidth="1.300" />
    <path d="M541.500 574v23l5.500-5 4 9 4-1.500-4-8.500h7.500z" fill="#fff" stroke="#1b1d33" strokeWidth="1.200" />
    <AxisLabel x="391.500" y="948" fill="#5fe04a">Y</AxisLabel>
  </Scene>
);

/* ---------- floating dialog ---------- */

const Backing = styled.div`
  position: absolute;
  top: 142px;
  left: 558px;
  width: 788px;
  height: 525px;
  background: #0b0b12;
`;
const Dialog = styled.div`
  display: flex;
  flex-direction: column;
  height: 525px;
  padding: 3px 3px 6px;
  background: #4f71a7;
  border-radius: 8px;
  color: #111;
`;
const DialogTitle = styled.div`
  display: flex;
  height: 45px;
  padding: 10px 0 0 7px;
  background: #778fbe;
  border-radius: 6px 6px 0 0;
  color: #94a9d2;
`;
const DialogName = styled.div`
  flex: 1;
  padding: 2px 0 0 10px;
`;
const DialogButton = styled.div`
  display: flex;
  align-items: ${(p) => (p.$low ? "flex-end" : "center")};
  justify-content: center;
  width: 36px;
  height: 16px;
`;
const DialogButtons = styled.div`
  display: flex;
  padding: 1px 7px 0 0;
`;
const DialogBody = styled.div`
  flex: 1;
  margin: 0 3px;
  background: #f4f4f4;
  border-radius: 0 0 4px 4px;
`;
const FormRow = styled.div`
  display: flex;
  justify-content: flex-end;
  align-items: center;
  gap: 22px;
  padding: 38px 37px 0 0;
`;
const FieldLabel = styled.label`
  padding-top: 2px;
`;
const NameInput = styled.input`
  width: 340px;
  height: 37px;
  border: 1px solid #abadb3;
  background: #fff;
`;
const ChangeButton = styled.button`
  display: block;
  width: 300px;
  height: 75px;
  margin: 38px auto 0;
  padding: 0;
  border: 1px solid #707070;
  background: #ddd;
  color: #111;
`;

const TestDialog = () => (
  <Backing>
    <Dialog>
      <DialogTitle>
        <Ico w={24} h={24}>
          <path d="M0 0h24v24H0z" fill="#fff" /><path d="M1.500 1.500h21v21h-21z" fill="#444" />
          <path d="M4 9h16v12H4z" fill="url(#paper)" /><path d="M2 8.500h20" stroke="#fff" /><path d="M13 5h7" stroke="#fff" strokeWidth="1.500" strokeDasharray="1.500 1.500" />
        </Ico>
        <DialogName><FitText width={68}>Test App</FitText></DialogName>
        <DialogButtons>
          <DialogButton $low><Ico w={15} h={4}><rect width="15" height="4" rx="1" fill="#fff" /></Ico></DialogButton>
          <DialogButton><Ico w={14} h={14}><rect x="1" y="1" width="12" height="12" rx="1.500" stroke="#fff" strokeWidth="1.600" /><path d="M1 1h12v3H1z" fill="#fff" /></Ico></DialogButton>
          <DialogButton><Ico w={14} h={13}><path d="M1.500 1l11 11M12.500 1l-11 11" stroke="#fff" strokeWidth="3.200" /></Ico></DialogButton>
        </DialogButtons>
      </DialogTitle>
      <DialogBody>
        <FormRow>
          <FieldLabel><FitText width={182}>Please give new Name:</FitText></FieldLabel>
          <NameInput />
        </FormRow>
        <ChangeButton><FitText width={113}>Change Name</FitText></ChangeButton>
      </DialogBody>
    </Dialog>
  </Backing>
);

export default function App() {
  return (
    <Shell>
      <GlobalStyle />
      <Defs />
      <Title />
      <RibbonBar />
      <Work>
        <TabStrip>
          {TABS.map(([t, w, tw, pad, active]) => (
            <Tab key={t} $w={w} $pad={pad} $active={active}><FitText width={tw}>{t}</FitText></Tab>
          ))}
        </TabStrip>
        <FeaturePanel />
        <Viewport>
          <ModelScene />
          <Handle><HandleDot /></Handle>
          <ViewBar>
            {VIEW_ICONS.map(([w, icon], i) => (
              <Cell key={i} $w={w} $h={42}>{icon || <Caret $c="#999" />}</Cell>
            ))}
          </ViewBar>
          <DocControls>
            <Cell $w={38} $h={43}><Ico w={18} h={21}><path d="M.700.700h16.600v19.600H.700z" stroke={GRAY} strokeWidth="1.400" /><path d="M5 7v8l-4.500-4z" fill={GRAY} /></Ico></Cell>
            <Cell $w={38} $h={43}><Ico w={18} h={21}><path d="M.700.700h16.600v19.600H.700z" stroke={GRAY} strokeWidth="1.400" /><path d="M13 7v8l4.500-4z" fill={GRAY} /></Ico></Cell>
            <Cell $w={38} $h={58}><Ico w={16} h={3}><path d="M0 0h16v3H0z" fill={GRAY} /></Ico></Cell>
            <Cell $w={38} $h={42}><Ico w={23} h={20}><path d="M7.500 6V1h15v11.500H16M.700 7.500h14.500v12H.700z" stroke={GRAY} strokeWidth="1.400" /></Ico></Cell>
            <Cell $w={38} $h={42}><Ico w={16} h={16}><path d="M.500.500l15 15M15.500.500l-15 15" stroke={GRAY} strokeWidth="2" /></Ico></Cell>
          </DocControls>
          <TestDialog />
        </Viewport>
        <TaskPane>
          <TaskTab $active><HomeIcon /></TaskTab>
          <TaskTab>
            <Ico w={22} h={25}><path d="M1 4l5-2 2 2 5-3 2 2 5-2 2 4v17l-3 1-13 1-6-4z" fill="url(#paper)" /><path d="M1 5l6 3v17M12 7v17M17 6v17M7 8l4-3M12 7l4-3M17 7l4-3" stroke="#555" /></Ico>
          </TaskTab>
          <TaskTab>
            <Ico w={31} h={24}><path d="M0 24V1l2-1h6l2 3h15v7z" fill="#c6c6c6" /><path d="M2 23L11 8h20l-8 15z" fill="url(#paper)" /></Ico>
          </TaskTab>
          <TaskTab>
            <Ico w={30} h={27}><path d="M1 1h28v25H1z" fill="#f5f5f5" stroke="#999" strokeWidth="1.500" /><g fill="#f5c51c" stroke="#3a2a00"><path d="M4.500 4.500h11v6h-11zM18.500 4.500h7v6h-7z" /><path d="M4.500 22.500v-5h3v-4h5v4h3v5z" /></g><path d="M18 16h11v10H18z" fill="#ccc" stroke="#555" /><path d="M18 16h11v3H18z" fill="#666" /></Ico>
          </TaskTab>
          <TaskTab><Ball size={28} /></TaskTab>
          <TaskTab><ListIcon /></TaskTab>
        </TaskPane>
      </Work>
    </Shell>
  );
}
